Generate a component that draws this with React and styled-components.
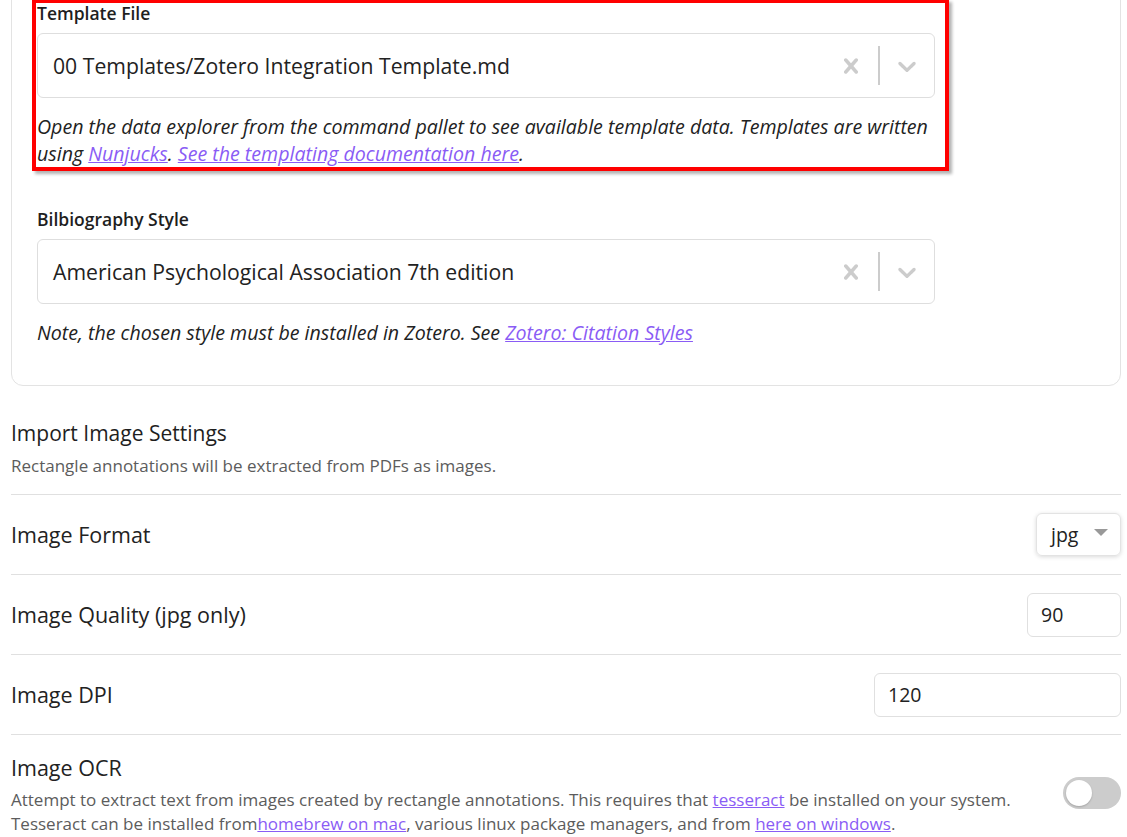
import React, { useState } from "react";
import styled, { createGlobalStyle } from "styled-components";

const GlobalStyle = createGlobalStyle`
  html, body {
    margin: 0;
    padding: 0;
    background: #ffffff;
    overflow: hidden;
  }
  body {
    font-family: "Open Sans", "Noto Sans", sans-serif;
    color: #222222;
  }
`;

const CrossIcon = () => (
  <svg width="30" height="30" viewBox="0 0 20 20" fill="currentColor">
    <path d="M14.348 14.849c-0.469 0.469-1.229 0.469-1.697 0l-2.651-3.030-2.651 3.029c-0.469 0.469-1.229 0.469-1.697 0-0.469-0.469-0.469-1.229 0-1.697l2.758-3.15-2.759-3.152c-0.469-0.469-0.469-1.228 0-1.697s1.228-0.469 1.697 0l2.652 3.031 2.651-3.031c0.469-0.469 1.228-0.469 1.697 0s0.469 1.229 0 1.697l-2.758 3.152 2.758 3.15c0.469 0.469 0.469 1.229 0 1.698z" />
  </svg>
);

const ChevronIcon = () => (
  <svg width="30" height="30" viewBox="0 0 20 20" fill="currentColor">
    <path d="M4.516 7.548c0.436-0.446 1.043-0.481 1.576 0l3.908 3.747 3.908-3.747c0.533-0.481 1.141-0.446 1.574 0 0.436 0.445 0.408 1.197 0 1.615-0.406 0.418-4.695 4.502-4.695 4.502-0.217 0.223-0.502 0.335-0.787 0.335s-0.57-0.112-0.789-0.335c0 0-4.287-4.084-4.695-4.502s-0.436-1.170 0-1.615z" />
  </svg>
);

const SearchSelect = ({ value }) => (
  <SelectBox>
    <SelectValue>{value}</SelectValue>
    <Indicator>
      <CrossIcon />
    </Indicator>
    <IndicatorSeparator />
    <Indicator>
      <ChevronIcon />
    </Indicator>
  </SelectBox>
);

const Toggle = ({ on, onClick }) => (
  <ToggleTrack $on={on} onClick={onClick}>
    <ToggleKnob $on={on} />
  </ToggleTrack>
);

const App = () => {
  const [ocr, setOcr] = useState(false);

  return (
    <Page>
      <GlobalStyle />
      <Card>
        <Highlight>
          <FieldLabel>Template File</FieldLabel>
          <SearchSelect value="00 Templates/Zotero Integration Template.md" />
          <FieldNote>
            Open the data explorer from the command pallet to see available
            template data. Templates are written
            <br />
            using <Link href="#">Nunjucks</Link>.{" "}
            <Link href="#">See the templating documentation here</Link>.
          </FieldNote>
        </Highlight>

        <Field>
          <FieldLabel>Bilbiography Style</FieldLabel>
          <SearchSelect value="American Psychological Association 7th edition" />
          <FieldNote>
            Note, the chosen style must be installed in Zotero. See{" "}
            <Link href="#">Zotero: Citation Styles</Link>
          </FieldNote>
        </Field>
      </Card>

      <SectionHeader>
        <SectionTitle>Import Image Settings</SectionTitle>
        <SectionDesc>
          Rectangle annotations will be extracted from PDFs as images.
        </SectionDesc>
      </SectionHeader>

      <SettingRow>
        <SettingInfo>
          <SettingName>Image Format</SettingName>
        </SettingInfo>
        <Dropdown>
          jpg
          <Caret />
        </Dropdown>
      </SettingRow>

      <SettingRow>
        <SettingInfo>
          <SettingName>Image Quality (jpg only)</SettingName>
        </SettingInfo>
        <TextInput $width={94} defaultValue="90" />
      </SettingRow>

      <SettingRow>
        <SettingInfo>
          <SettingName>Image DPI</SettingName>
        </SettingInfo>
        <TextInput $width={247} defaultValue="120" />
      </SettingRow>

      <SettingRow $tall>
        <SettingInfo>
          <SettingName>Image OCR</SettingName>
          <SettingDesc>
            Attempt to extract text from images created by rectangle
            annotations. This requires that <Link href="#">tesseract</Link> be
            installed on your system.
            <br />
            Tesseract can be installed from
            <Link href="#">homebrew on mac</Link>, various linux package
            managers, and from <Link href="#">here on windows</Link>.
          </SettingDesc>
        </SettingInfo>
        <Toggle on={ocr} onClick={() => setOcr(!ocr)} />
      </SettingRow>
    </Page>
  );
};

const Page = styled.div`
  width: 1110px;
  padding-left: 11px;
`;

const Card = styled.div`
  margin-top: -30px;
  padding: 28px 25px 39px 25px;
  border: 1px solid #e3e3e3;
  border-radius: 12px;
  display: flex;
  flex-direction: column;
  gap: 38px;
`;

const Field = styled.div`
  display: flex;
  flex-direction: column;
`;

const Highlight = styled(Field)`
  width: 908px;
  margin-left: -5px;
  padding: 0 0 0 1px;
  border: 4px solid #ff0000;
  box-shadow: 3px 3px 3px rgba(0, 0, 0, 0.3);
`;

const FieldLabel = styled.div`
  font-size: 17.5px;
  font-weight: 600;
  line-height: 20px;
  height: 20px;
  margin-bottom: 10px;
  color: #1e1e1e;
  white-space: nowrap;
`;

const SelectBox = styled.div`
  width: 898px;
  height: 65px;
  box-sizing: border-box;
  border: 1px solid #dedede;
  border-radius: 6px;
  display: flex;
  align-items: center;
  background: #ffffff;
`;

const SelectValue = styled.div`
  flex: 1;
  padding-left: 15px;
  font-size: 21.2px;
  color: #222222;
  white-space: nowrap;
`;

const Indicator = styled.div`
  display: flex;
  padding: 0 12px;
  color: #cccccc;
`;

const IndicatorSeparator = styled.span`
  width: 2px;
  height: 39px;
  background: #cccccc;
`;

const FieldNote = styled.div`
  margin-top: 15px;
  font-size: 19.6px;
  font-style: italic;
  line-height: 27px;
  color: #222222;
  white-space: nowrap;
`;

const Link = styled.a`
  color: #8a5cf5;
  text-decoration: underline;
`;

const SectionHeader = styled.div`
  padding: 32px 0 17px 0;
  border-bottom: 1px solid #e0e0e0;
`;

const SectionTitle = styled.div`
  font-size: 21px;
  font-weight: 500;
  line-height: 30px;
  color: #1e1e1e;
`;

const SectionDesc = styled.div`
  margin-top: 7px;
  font-size: 17px;
  line-height: 22px;
  color: #5c5c5c;
`;

const SettingRow = styled.div`
  display: flex;
  align-items: ${(p) => (p.$tall ? "flex-start" : "center")};
  justify-content: space-between;
  gap: 16px;
  height: ${(p) => (p.$tall ? "auto" : "79px")};
  padding-top: ${(p) => (p.$tall ? "19px" : "0")};
  border-bottom: ${(p) => (p.$tall ? "none" : "1px solid #e0e0e0")};
`;

const SettingInfo = styled.div`
  flex: 1;
  min-width: 0;
`;

const SettingName = styled.div`
  font-size: 21.5px;
  line-height: 28px;
  color: #222222;
`;

const SettingDesc = styled.div`
  margin-top: 6px;
  font-size: 17px;
  line-height: 24px;
  color: #5c5c5c;
  white-space: nowrap;
`;

const Dropdown = styled.div`
  width: 85px;
  height: 43px;
  box-sizing: border-box;
  padding: 0 12px 0 14px;
  border: 1px solid #e3e3e3;
  border-radius: 6px;
  box-shadow: 0 1px 4px rgba(0, 0, 0, 0.15);
  display: flex;
  align-items: center;
  justify-content: space-between;
  font-size: 19.5px;
  color: #222222;
`;

const Caret = styled.span`
  width: 0;
  height: 0;
  margin-bottom: 4px;
  border-left: 7px solid transparent;
  border-right: 7px solid transparent;
  border-top: 7px solid #999999;
`;

const TextInput = styled.input`
  width: ${(p) => p.$width}px;
  height: 44px;
  box-sizing: border-box;
  padding: 0 13px;
  border: 1px solid #e0e0e0;
  border-radius: 6px;
  font-family: "Open Sans", "Noto Sans", sans-serif;
  font-size: 19.5px;
  color: #222222;
  background: #ffffff;
  outline: none;
`;

const ToggleTrack = styled.div`
  margin-top: 23px;
  width: 58px;
  height: 32px;
  box-sizing: border-box;
  border-radius: 16px;
  background: ${(p) => (p.$on ? "#8a5cf5" : "#cccccc")};
  padding: 3px;
  display: flex;
  justify-content: ${(p) => (p.$on ? "flex-end" : "flex-start")};
  cursor: pointer;
`;

const ToggleKnob = styled.span`
  width: 26px;
  height: 26px;
  border-radius: 50%;
  background: #ffffff;
  box-shadow: 0 1px 2px rgba(0, 0, 0, 0.2);
`;

export default App;
